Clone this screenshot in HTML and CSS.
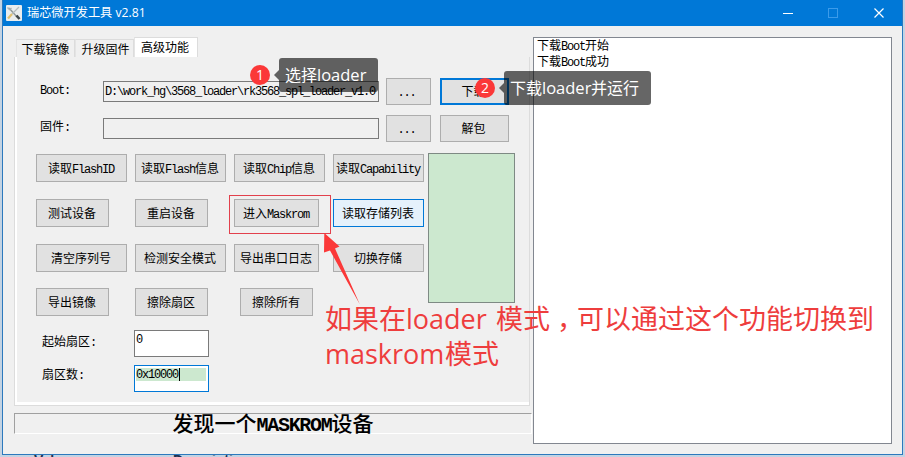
FILE: index.html
```html
<!DOCTYPE html>
<html lang="zh-CN">
<head>
<meta charset="utf-8">
<title>瑞芯微开发工具 v2.81</title>
<link rel="stylesheet" href="styles.css">
</head>
<body>
<div class="window">
  <header class="titlebar">
    <svg class="app-icon" width="16" height="16" viewBox="0 0 16 16">
      <rect width="16" height="16" rx="1" fill="#e9edee"/>
      <path d="M3 3l8 9" stroke="#8b9699" stroke-width="1.3"/>
      <path d="M1.500 2.500l2 2 2-1.500" stroke="#a9b2b4" stroke-width="1.500" fill="none"/>
      <path d="M13 2L6 9" stroke="#b5bcbe" stroke-width="1.300"/>
      <path d="M6 9l-4 4.500" stroke="#e0c070" stroke-width="2.200"/>
      <path d="M10.500 10.500l3 3.500" stroke="#3c4448" stroke-width="2.600"/>
    </svg>
    <span class="title">瑞芯微开发工具 v2.81</span>
    <svg class="controls" width="104" height="12" viewBox="0 0 104 12" fill="none">
      <path d="M0 6.500h10" stroke="#fff"/>
      <rect x="45.500" y="1.500" width="9" height="9" stroke="#3b9bea"/>
      <path d="M91.500 1.500l9 9M100.500 1.500l-9 9" stroke="#fff" stroke-width="1.200"/>
    </svg>
  </header>
  <main class="body">
    <section class="left">
      <nav class="tabs">
        <span class="tab">下载镜像</span><span class="tab second">升级固件</span><span class="tab active">高级功能</span>
      </nav>
      <div class="panel">
        <div class="file-row">
          <span class="label"><i>Boot:</i></span>
          <div class="path"><i>D:\work_hg\3568_loader\rk3568_spl_loader_v1.0</i></div>
          <button class="btn dots"><i>...</i></button>
          <button class="btn act primary">下载</button>
        </div>
        <div class="file-row second">
          <span class="label">固件<i>:</i></span>
          <div class="path"></div>
          <button class="btn dots"><i>...</i></button>
          <button class="btn act">解包</button>
        </div>
        <div class="tools">
          <div class="grid">
            <button class="btn">读取<i>FlashID</i></button>
            <button class="btn">读取<i>Flash</i>信息</button>
            <button class="btn">读取<i>Chip</i>信息</button>
            <button class="btn">读取<i>Capability</i></button>
            <button class="btn small">测试设备</button>
            <button class="btn small">重启设备</button>
            <button class="btn medium">进入<i>Maskrom</i></button>
            <button class="btn hot">读取存储列表</button>
            <button class="btn">清空序列号</button>
            <button class="btn">检测安全模式</button>
            <button class="btn medium">导出串口日志</button>
            <button class="btn">切换存储</button>
            <button class="btn small">导出镜像</button>
            <button class="btn small">擦除扇区</button>
            <button class="btn small shifted">擦除所有</button>
          </div>
          <div class="list"></div>
        </div>
        <div class="field"><span class="flabel">起始扇区<i>:</i></span><div class="entry"><b>0</b></div></div>
        <div class="field"><span class="flabel up">扇区数<i>:</i></span><div class="entry focus"><b>0x10000<span class="caret"></span></b></div></div>
      </div>
      <div class="status">发现一个<i>MASKROM</i>设备</div>
    </section>
    <section class="log">
      <div>下载<i>Boot</i>开始</div>
      <div>下载<i>Boot</i>成功</div>
    </section>
  </main>
</div>
<footer class="behind"><span class="c1">Value</span><span>Description</span></footer>

<div class="pin pin1">1</div>
<div class="tip tip1">选择<span>loader</span></div>
<div class="pin pin2">2</div>
<div class="tip tip2">下载<span>loader</span>并运行</div>
<div class="frame"></div>
<svg class="arrow" width="40" height="74" viewBox="0 0 40 74"><path d="M2.300 1L17.500 14.500L13 16.500L37.900 72.500L8 18.500L2 20.500z" fill="#fb3838"/></svg>
<div class="note"><div>如果在<span class="w1">loader</span>模式<span class="comma">，</span>可以通过这个功能切换到</div><div><span class="w2">maskrom</span>模式</div></div>
</body>
</html>
```
FILE: styles.css
```css
* { box-sizing: border-box; }
body {
  margin: 0;
  width: 905px;
  height: 457px;
  overflow: hidden;
  position: relative;
  background: #c3d3e3;
  font: 12px/16px "Noto Sans CJK SC", sans-serif;
  color: #000;
}
i {
  font-style: normal;
  font-family: "Liberation Mono", monospace;
  font-size: 12px;
  line-height: 1;
  letter-spacing: -1.2px;
}
.window {
  width: 901px;
  height: 455px;
  margin-left: 2px;
  border: 1px solid #2c79bd;
  border-top: 0;
  background: #f0f0f0;
}
.titlebar {
  height: 26px;
  background: #0078d7;
  color: #fff;
  display: flex;
  align-items: center;
  padding: 0 15px 0 3px;
}
.title {
  margin-left: 5px;
  font: 12.200px/16px "Open Sans", "Noto Sans CJK SC", sans-serif;
}
.controls { margin-left: auto; }
.body { display: flex; padding: 11px 10px 10px 11px; height: 428px; }
.left { width: 519px; display: flex; flex-direction: column; }
.tabs { display: flex; height: 20px; padding-left: 2px; align-items: flex-end; }
.tab {
  width: 59px;
  height: 18px;
  line-height: 17px;
  text-align: center;
  border: 1px solid #dcdcdc;
  border-bottom: 0;
  border-left-color: #e4e4e4;
}
.tab.second { padding-left: 2px; }
.tab.active {
  width: 64px;
  height: 20px;
  padding-right: 2px;
  background: #fff;
}
.panel {
  width: 516px;
  height: 349px;
  border: 1px solid #dcdcdc;
  border-top: 0;
  box-shadow: inset 2px -3px #fff;
  padding: 21px 0 0 21px;
}
.file-row { display: flex; align-items: center; height: 27px; }
.file-row.second { margin-top: 10px; }
.label { width: 67px; padding: 0 0 5px 4px; }
.path {
  width: 276px;
  height: 21px;
  border: 1px solid #7a7a7a;
  padding-left: 1px;
  line-height: 16px;
  white-space: nowrap;
  overflow: hidden;
}
.btn {
  width: 91px;
  height: 28px;
  padding: 0 1px 1px 0;
  border: 1px solid #adadad;
  background: #e1e1e1;
  font: 12px/16px "Noto Sans CJK SC", sans-serif;
  color: #000;
  white-space: nowrap;
}
.btn.dots { width: 45px; height: 27px; margin-left: 7px; padding-right: 4px; }
.btn.act { width: 69px; height: 27px; margin-left: 9px; padding-right: 2px; }
.btn.primary { border: 2px solid #0078d7; padding-right: 2px; }
.btn.small { width: 73px; }
.btn.medium { width: 85px; }
.btn.shifted { margin-left: 6px; }
.btn.hot { background: #e5f1fb; border-color: #0078d7; }
.tools { display: flex; margin-top: 11px; height: 177px; }
.grid {
  width: 392px;
  padding-top: 1px;
  display: grid;
  grid-template-columns: repeat(4, 99px);
  grid-template-rows: 45px 45px 44px 28px;
  align-items: start;
}
.list { width: 87px; height: 150px; border: 1px solid #7e8a84; background: #cce8cf; }
.field { display: flex; height: 35px; }
.flabel { width: 98px; padding: 3px 0 0 6px; }
.flabel.up { padding-top: 1px; }
.entry {
  width: 75px;
  height: 27px;
  border: 1px solid #7a7a7a;
  background: #fff;
  padding: 2px 2px 2px 1px;
}
.entry b {
  display: flex;
  height: 13px;
  font: 12px/14px "Liberation Mono", monospace;
  letter-spacing: -1.200px;
}
.entry.focus { border-color: #0078d7; }
.entry.focus b { background: #cce8cf; }
.caret { width: 1px; height: 13px; margin-left: 1px; background: #000; }
.status {
  width: 518px;
  height: 21px;
  margin-top: 7px;
  border: 1px solid #a0a0a0;
  border-right-color: #fff;
  border-bottom-color: #fff;
  font-size: 21px;
  font-weight: 500;
  line-height: 17px;
  text-align: center;
  white-space: nowrap;
}
.status i { font-size: 20px; font-weight: 700; letter-spacing: -1.300px; }
.log {
  width: 359px;
  height: 407px;
  border: 1px solid #828790;
  background: #fff;
  padding-left: 3px;
}
.log div { height: 16px; line-height: 14px; }
.behind {
  height: 2px;
  overflow: hidden;
  display: flex;
  padding-left: 34px;
  font: bold 14px/10px "Liberation Sans", sans-serif;
  color: #1d3050;
}
.c1 { width: 139px; }
.pin {
  position: absolute;
  width: 20px;
  height: 20px;
  border-radius: 50%;
  background: #fb3838;
  color: #fff;
  font: 14px/19px "Open Sans", sans-serif;
  text-align: center;
}
.pin1 { left: 250px; top: 65px; }
.pin2 { left: 475px; top: 78px; }
.tip {
  position: absolute;
  height: 34px;
  border-radius: 3px;
  background: rgba(0, 0, 0, .6);
  color: #fff;
  font-size: 16px;
  line-height: 33px;
  padding-left: 6px;
  white-space: nowrap;
}
.tip::before {
  content: "";
  position: absolute;
  left: -5px;
  top: 12px;
  border: 5px solid transparent;
  border-left: 0;
  border-right-color: rgba(0, 0, 0, .6);
}
.tip span {
  display: inline-block;
  width: 49px;
  font-family: "Open Sans", sans-serif;
  font-size: 16.500px;
}
.tip1 { left: 279px; top: 58px; width: 99px; }
.tip2 { left: 504px; top: 71px; width: 147px; }
.frame {
  position: absolute;
  left: 229px;
  top: 195px;
  width: 102px;
  height: 39px;
  border: 1px solid #e2404c;
}
.arrow { position: absolute; left: 322px; top: 232px; }
.note {
  position: absolute;
  left: 325px;
  top: 300px;
  color: #ee3d3d;
  font-size: 27px;
  line-height: 35px;
  white-space: nowrap;
}
.note div { height: 35px; }
.note span { display: inline-block; font-family: "Open Sans", sans-serif; }
.note .w1 { width: 90px; }
.note .w2 { width: 120px; }
.note .comma { width: 27px; padding-left: 7px; font-family: "Noto Sans CJK SC", sans-serif; }
```
